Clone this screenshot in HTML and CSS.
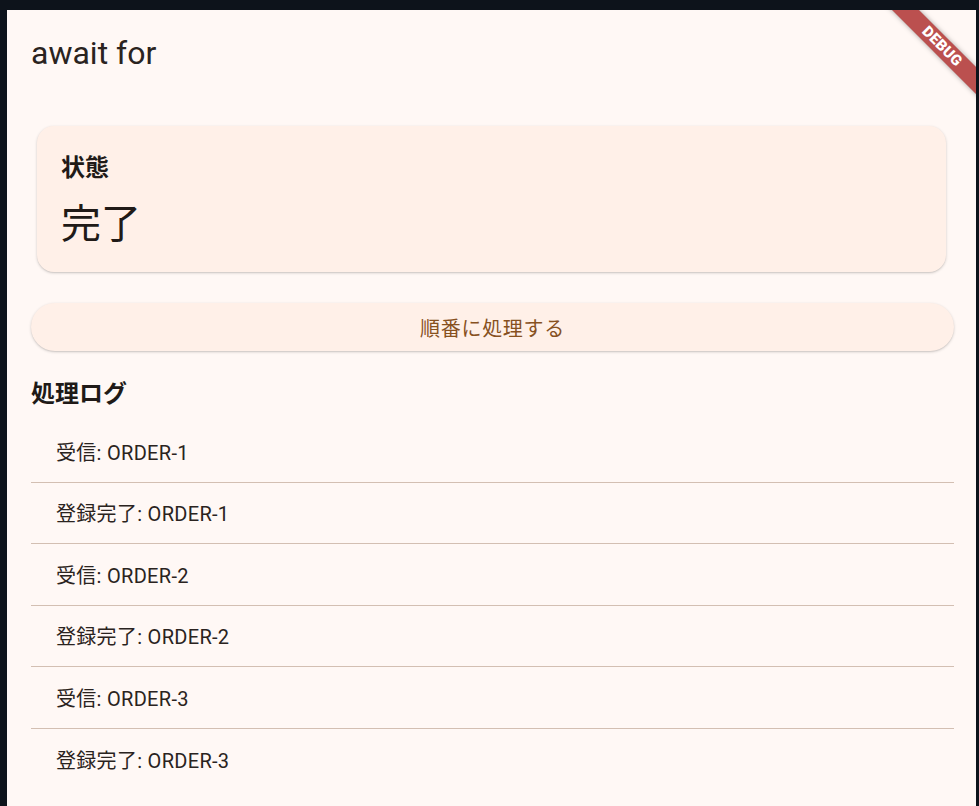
FILE: index.html
```html
<!DOCTYPE html>
<html lang="ja">
<head>
  <meta charset="UTF-8" />
  <meta name="viewport" content="width=device-width, initial-scale=1.0" />
  <title>await for</title>
  <link rel="stylesheet" href="styles.css">
</head>
<body>
  <div class="window">
    <div class="app">
      <header class="app-bar">
        <h1 class="app-title">await for</h1>
      </header>

      <main class="content">
        <section class="status-card">
          <div class="status-label">状態</div>
          <div class="status-value">完了</div>
        </section>

        <button class="run-button">順番に処理する</button>

        <h2 class="log-title">処理ログ</h2>

        <ul class="log-list">
          <li class="log-item">受信: ORDER-1</li>
          <li class="log-item">登録完了: ORDER-1</li>
          <li class="log-item">受信: ORDER-2</li>
          <li class="log-item">登録完了: ORDER-2</li>
          <li class="log-item">受信: ORDER-3</li>
          <li class="log-item">登録完了: ORDER-3</li>
        </ul>
      </main>

      <div class="debug-banner">DEBUG</div>
    </div>
  </div>
</body>
</html>
```

FILE: styles.css
```css
:root {
  --frame: #0d131b;
  --surface: #fff8f5;
  --surface-low: #fff0e8;
  --on-surface: #201a17;
  --primary: #87511f;
  --outline-variant: #d3bfb2;
}

* {
  box-sizing: border-box;
}

body {
  margin: 0;
  padding: 0;
  background: var(--frame);
  font-family: Roboto, "Noto Sans CJK JP", sans-serif;
  color: var(--on-surface);
}

/* dark frame around the app view */
.window {
  padding: 10px 0 0 7px;
  height: 806px;
}

.app {
  position: relative;
  width: 969px;
  height: 796px;
  background: var(--surface);
  overflow: hidden;
}

.app-bar {
  height: 86px;
  display: flex;
  align-items: center;
  padding: 0 24px;
}

.app-title {
  margin: 0;
  font-size: 32px;
  font-weight: 400;
  line-height: 38px;
  color: #2a2320;
}

.content {
  display: flex;
  flex-direction: column;
  padding: 0 22px 0 24px;
}

/* status card */
.status-card {
  margin: 30px 8px 0 6px;
  height: 146px;
  padding: 24px 24px 23px 24px;
  background: var(--surface-low);
  border-radius: 17px;
  box-shadow: 0 1px 3px rgba(0, 0, 0, 0.18), 0 1px 1px rgba(0, 0, 0, 0.06);
}

.status-label {
  font-size: 24px;
  font-weight: 700;
  line-height: 36px;
}

.status-value {
  margin-top: 15px;
  font-size: 40px;
  line-height: 48px;
}

.run-button {
  margin-top: 31px;
  height: 48px;
  border: none;
  border-radius: 24px;
  background: var(--surface-low);
  color: var(--primary);
  font-family: Roboto, "Noto Sans CJK JP", sans-serif;
  font-size: 20px;
  letter-spacing: 0.7px;
  box-shadow: 0 1px 3px rgba(0, 0, 0, 0.18), 0 1px 1px rgba(0, 0, 0, 0.06);
  cursor: pointer;
}

.log-title {
  margin: 25px 0 0 0;
  font-size: 24px;
  font-weight: 700;
  line-height: 36px;
}

.log-list {
  list-style: none;
  margin: 9px 0 0;
  padding: 0;
}

.log-item {
  height: 61.5px;
  display: flex;
  align-items: center;
  padding-left: 25px;
  font-size: 20px;
  letter-spacing: 0.3px;
  color: #2a2320;
  border-bottom: 1px solid var(--outline-variant);
}

.log-item:last-child {
  border-bottom: none;
}

/* corner ribbon */
.debug-banner {
  position: absolute;
  left: 855px;
  top: 27px;
  width: 160px;
  height: 19px;
  transform: rotate(45deg);
  background: rgba(168, 32, 32, 0.78);
  box-shadow: 0 0 5px rgba(0, 0, 0, 0.35);
  color: #fff;
  font-family: Roboto, sans-serif;
  font-size: 15px;
  font-weight: 900;
  line-height: 19px;
  text-align: center;
  letter-spacing: 0.3px;
}
```
